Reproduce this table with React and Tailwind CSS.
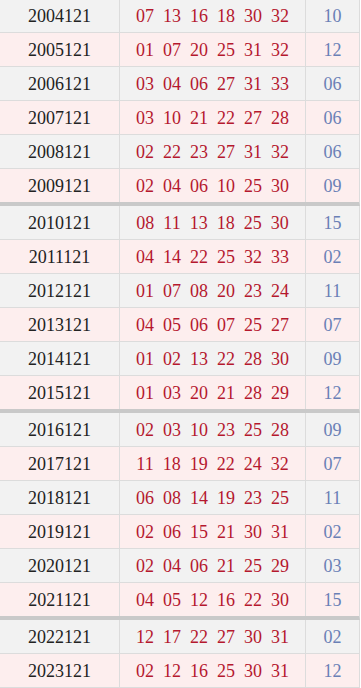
const draws = [
  ["2004121", ["07", "13", "16", "18", "30", "32"], "10"],
  ["2005121", ["01", "07", "20", "25", "31", "32"], "12"],
  ["2006121", ["03", "04", "06", "27", "31", "33"], "06"],
  ["2007121", ["03", "10", "21", "22", "27", "28"], "06"],
  ["2008121", ["02", "22", "23", "27", "31", "32"], "06"],
  ["2009121", ["02", "04", "06", "10", "25", "30"], "09"],
  ["2010121", ["08", "11", "13", "18", "25", "30"], "15"],
  ["2011121", ["04", "14", "22", "25", "32", "33"], "02"],
  ["2012121", ["01", "07", "08", "20", "23", "24"], "11"],
  ["2013121", ["04", "05", "06", "07", "25", "27"], "07"],
  ["2014121", ["01", "02", "13", "22", "28", "30"], "09"],
  ["2015121", ["01", "03", "20", "21", "28", "29"], "12"],
  ["2016121", ["02", "03", "10", "23", "25", "28"], "09"],
  ["2017121", ["11", "18", "19", "22", "24", "32"], "07"],
  ["2018121", ["06", "08", "14", "19", "23", "25"], "11"],
  ["2019121", ["02", "06", "15", "21", "30", "31"], "02"],
  ["2020121", ["02", "04", "06", "21", "25", "29"], "03"],
  ["2021121", ["04", "05", "12", "16", "22", "30"], "15"],
  ["2022121", ["12", "17", "22", "27", "30", "31"], "02"],
  ["2023121", ["02", "12", "16", "25", "30", "31"], "12"],
];

// a thick rule closes every sixth row
const isGroupEnd = (i) => i % 6 === 5 && i !== draws.length - 1;

const App = () => {
  return (
    <div
      className="-mt-px w-[360px] text-[18px] leading-none"
      style={{ fontFamily: '"Liberation Serif", "Noto Sans CJK SC", serif' }}
    >
      {draws.map(([issue, reds, blue], i) => (
        <div
          key={issue}
          className={`flex border-r border-[#dcdcdc] ${
            isGroupEnd(i)
              ? "h-[37px] border-b-4 border-b-[#c9c9c9]"
              : "h-[34px] border-b border-b-[#dcdcdc]"
          } ${i % 2 === 0 ? "bg-[#f2f2f2]" : "bg-[#fdeeee]"}`}
        >
          <div className="flex w-[120px] items-center justify-center border-r border-[#dcdcdc] text-[#222]">
            {issue}
          </div>
          <div className="flex w-[186px] items-center justify-center gap-[9px] border-r border-[#dcdcdc] text-[#b5182e]">
            {reds.map((n, j) => (
              <span key={j}>{n}</span>
            ))}
          </div>
          <div className="flex flex-1 items-center justify-center text-[#6a80b6]">
            {blue}
          </div>
        </div>
      ))}
    </div>
  );
};

export default App;
